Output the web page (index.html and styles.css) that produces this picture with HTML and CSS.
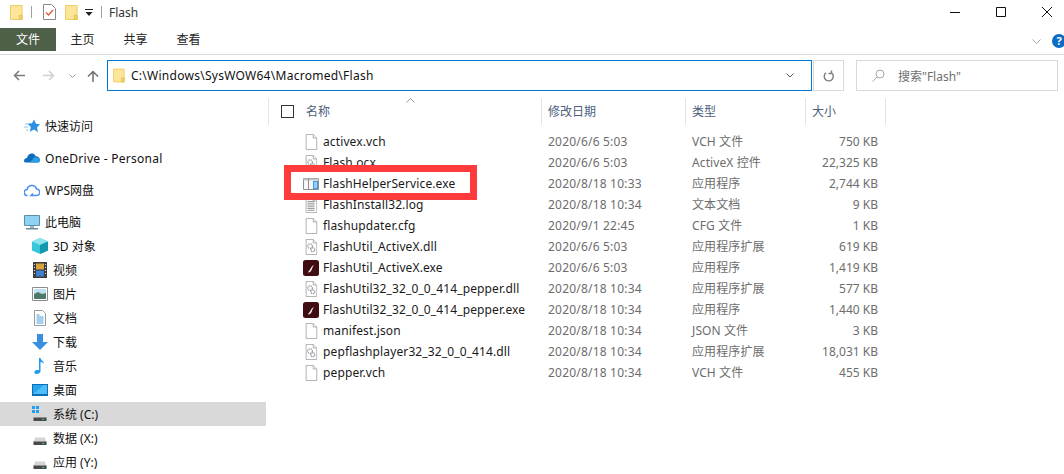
FILE: index.html
```html
<!DOCTYPE html>
<html lang="zh-CN">
<head>
    <meta charset="UTF-8">
    <title>Flash</title>
    <link rel="stylesheet" href="styles.css">
</head>
<body>
    <svg class="defs" width="0" height="0">
        <symbol id="folder" viewBox="0 0 14 16">
            <path d="M.5.5h12.5v15H.5z" fill="#fde69c" stroke="#ecc95a"/>
            <path d="M10 11h3v4.500h-3z" fill="#f8d775" stroke="#e3bb45"/>
        </symbol>
        <symbol id="blank" viewBox="0 0 14 18">
            <path d="M1.500.5h8l4 4v13h-12z" fill="#fff" stroke="#a8a8a8"/>
            <path d="M9.500.5v4h4" fill="#f2f2f2" stroke="#a8a8a8"/>
        </symbol>
        <symbol id="dll" viewBox="0 0 14 18">
            <use href="#blank" width="14" height="18"/>
            <circle cx="6" cy="8" r="2.600" fill="none" stroke="#9aa3ad" stroke-width="1.500" stroke-dasharray="1.500 .8"/>
            <circle cx="9" cy="12" r="2.200" fill="none" stroke="#7d8793" stroke-width="1.300" stroke-dasharray="1.300 .7"/>
        </symbol>
        <symbol id="log" viewBox="0 0 14 18">
            <use href="#blank" width="14" height="18"/>
            <path d="M3 5h8M3 7h8M3 9h8M3 11h8M3 13h8M3 15h8" stroke="#8c8c8c"/>
        </symbol>
        <symbol id="app" viewBox="0 0 16 12">
            <path d="M.5.500h15v11H.500z" fill="#f6f6f6" stroke="#8f8f8f"/>
            <path d="M.5.500h15v2H.500z" fill="#c9c9c9"/>
            <path d="M5.500.500v11" stroke="#8f8f8f"/>
            <path d="M10 3h5v8h-5z" fill="#3d9be9"/>
            <path d="M11 5h3M11 7h3M11 9h3" stroke="#fff"/>
        </symbol>
        <symbol id="swf" viewBox="0 0 16 16">
            <rect width="16" height="16" rx="2.500" fill="#3f0d12"/>
            <path d="M5 12.500c.5-1.500 1.500-2 2.300-3.500S9 5.500 11 5C10 6.500 9.500 7.500 8.800 9.500S7 12.500 5 12.500z" fill="#f4e9e4"/>
        </symbol>
        <symbol id="drive" viewBox="0 0 16 10">
            <path d="M2.500 1h11l2 5H.5z" fill="#d6d6d6"/>
            <path d="M.5 5.500h15V9.500H.5z" fill="#4a4a4a"/>
            <path d="M10.500 7h2v1.500h-2z" fill="#35d04f"/>
        </symbol>
    </svg>

    <div class="window">
        <header class="titlebar">
            <svg class="qat-folder" width="13" height="15"><use href="#folder"/></svg>
            <span class="qat-sep"></span>
            <svg class="qat-check" width="13" height="16" viewBox="0 0 13 16">
                <path d="M.5.500h8l4 4v11H.500z" fill="#fff" stroke="#8a8a8a"/>
                <path d="M3 8.500l2.500 2.500L10 6" fill="none" stroke="#e2593a" stroke-width="1.300"/>
            </svg>
            <svg class="qat-folder2" width="13" height="15"><use href="#folder"/></svg>
            <svg class="qat-arrow" width="8" height="7" viewBox="0 0 8 7">
                <path d="M0 0h8v1H0zM.500 3h7L4 7z" fill="#222"/>
            </svg>
            <span class="qat-sep qat-sep-last"></span>
            <span class="title">Flash</span>
            <div class="window-btns">
                <svg width="10" height="10" viewBox="0 0 10 10"><path d="M0 5.500h10" stroke="#111"/></svg>
                <svg width="10" height="10" viewBox="0 0 10 10"><path d="M.5.500h9v9h-9z" fill="none" stroke="#111"/></svg>
                <svg width="10" height="10" viewBox="0 0 10 10"><path d="M0 0l10 10M10 0L0 10" stroke="#111"/></svg>
            </div>
        </header>

        <nav class="ribbon">
            <a class="tab tab-file">文件</a>
            <a class="tab">主页</a>
            <a class="tab">共享</a>
            <a class="tab">查看</a>
            <svg class="ribbon-chevron" width="9" height="5" viewBox="0 0 9 5"><path d="M.5.500l4 4 4-4" fill="none" stroke="#a6a6a6"/></svg>
            <span class="help">?</span>
        </nav>

        <div class="addressbar">
            <svg class="nav-back" width="12" height="11" viewBox="0 0 12 11"><path d="M12 5.500H1.500M6 1L1.500 5.500 6 10" fill="none" stroke="#7a7a7a" stroke-width="1.500"/></svg>
            <svg class="nav-forward" width="12" height="11" viewBox="0 0 12 11"><path d="M0 5.500h10.500M6 1l4.500 4.500L6 10" fill="none" stroke="#d0d0d0" stroke-width="1.500"/></svg>
            <svg class="nav-recent" width="7" height="4" viewBox="0 0 7 4"><path d="M.5.500l3 3 3-3" fill="none" stroke="#9a9a9a"/></svg>
            <svg class="nav-up" width="12" height="12" viewBox="0 0 12 12"><path d="M6 12V1.500M1 6.500l5-5 5 5" fill="none" stroke="#6f6f6f" stroke-width="1.500"/></svg>
            <div class="path">
                <svg width="12" height="15"><use href="#folder"/></svg>
                <span class="path-text">C:\Windows\SysWOW64\Macromed\Flash</span>
                <svg class="path-chevron" width="8" height="5" viewBox="0 0 8 5"><path d="M.5.500L4 4 7.500.500" fill="none" stroke="#555"/></svg>
            </div>
            <div class="refresh">
                <svg width="11" height="12" viewBox="0 0 11 12"><path d="M3 2.800a4.500 4.500 0 1 0 5.500 0M8.500 .5v3h-3" fill="none" stroke="#7d7d7d" stroke-width="1.400"/></svg>
            </div>
            <div class="search">
                <svg width="13" height="13" viewBox="0 0 13 13"><circle cx="8" cy="5" r="4" fill="none" stroke="#a8a8a8"/><path d="M5 8l-4.500 4.500" stroke="#a8a8a8"/></svg>
                <span>搜索"Flash"</span>
            </div>
        </div>

        <div class="content">
            <aside class="sidebar">
                <div class="nav-item group">
                    <svg width="16" height="16" viewBox="0 0 16 16"><path d="M10 1.500l2 4.300 4 .5-3 3.200.9 4.700L10 11.400l-4.100 2.300.9-4.700-3.300-3.200 4.500-.5z" fill="#2d8fe0"/><path d="M1 6h3M0 9h4M2 12h2" stroke="#8cc4ee"/></svg>
                    <span>快速访问</span>
                </div>
                <div class="nav-item group">
                    <svg width="16" height="16" viewBox="0 0 16 16"><path d="M0 11c0-2 1.500-3 3-3 .5-3 3-5 5.500-4.500 1.500.300 2.700 1.300 3.200 2.700 2-.2 4.300 1.300 4.300 3.800 0 1.500-1 2.500-2 2.500H2c-1 0-2-.500-2-1.500z" fill="#0f6cbd"/><path d="M6 12.500l4-5c2-1 5.500 0 6 3 0 1-.8 2-2 2z" fill="#2a9fe6"/></svg>
                    <span class="latin">OneDrive - Personal</span>
                </div>
                <div class="nav-item group">
                    <svg width="16" height="16" viewBox="0 0 16 16"><path d="M3.500 13.500a3 3 0 0 1-.5-6c.5-2.500 2.500-4 5-4s4 1.500 4.500 3.500a3.200 3.200 0 0 1 0 6.500H7l2-2" fill="none" stroke="#4d8ef0" stroke-width="1.500"/></svg>
                    <span>WPS网盘</span>
                </div>
                <div class="nav-item group">
                    <svg width="16" height="15" viewBox="0 0 16 15"><path d="M.5.500h15v10H.5z" fill="#8fd3f4" stroke="#5a8fa8"/><path d="M6 11h4v2H6z" fill="#9db5c2"/><path d="M2 13h12v1.500H2z" fill="#6c8999"/></svg>
                    <span>此电脑</span>
                </div>
                <div class="nav-item sub">
                    <svg width="16" height="16" viewBox="0 0 16 16"><path d="M8 0l8 3.500v9L8 16l-8-3.500v-9z" fill="#38c6d9"/><path d="M8 0l8 3.500L8 7 0 3.500z" fill="#8be5ef"/><path d="M8 7l8-3.500v9L8 16z" fill="#1597b0"/></svg>
                    <span>3D 对象</span>
                </div>
                <div class="nav-item sub">
                    <svg width="16" height="16" viewBox="0 0 14 16"><path d="M0 0h14v16H0z" fill="#3c3c3c"/><path d="M3 1.500h8v6H3z" fill="#d6a33c"/><path d="M3 8.500h8v6H3z" fill="#3f7fd0"/><path d="M1 2h1v1H1zM1 5h1v1H1zM1 8h1v1H1zM1 11h1v1H1zM12 2h1v1h-1zM12 5h1v1h-1zM12 8h1v1h-1zM12 11h1v1h-1z" fill="#ddd"/></svg>
                    <span>视频</span>
                </div>
                <div class="nav-item sub">
                    <svg width="16" height="14" viewBox="0 0 16 14"><path d="M.5.500h15v13H.5z" fill="#fff" stroke="#8c8c8c"/><path d="M2 2h12v5H2z" fill="#bfe0f2"/><path d="M2 7l4-2 4 2 4-1v6H2z" fill="#4d7a66"/></svg>
                    <span>图片</span>
                </div>
                <div class="nav-item sub">
                    <svg width="16" height="16" viewBox="0 0 14 16"><path d="M1.500.5h8l3 3v12h-11z" fill="#fff" stroke="#9a9a9a"/><path d="M3.500 5h3M3.500 7h7M3.500 9h7M3.500 11h7M3.500 13h7" stroke="#4a9edb"/></svg>
                    <span>文档</span>
                </div>
                <div class="nav-item sub">
                    <svg width="16" height="16" viewBox="0 0 16 16"><path d="M5 0h6v8h5l-8 8-8-8h5z" fill="#3b8fe0"/></svg>
                    <span>下载</span>
                </div>
                <div class="nav-item sub">
                    <svg width="16" height="16" viewBox="0 0 16 16"><path d="M7 0h1.500c.3 2.500 3.500 3 3.500 6-1-1.500-2.500-2-3.500-2v9c0 2-2 3-4 3-1.500 0-2.500-1-2-2.300C3 12 5.500 11.500 7 12.300z" fill="#1e9bf0"/></svg>
                    <span>音乐</span>
                </div>
                <div class="nav-item sub">
                    <svg width="16" height="12" viewBox="0 0 16 12"><path d="M0 0h16v12H0z" fill="#0a6fb5"/><path d="M1 1h14v9H1z" fill="#27a5f0"/><path d="M1 10L12 1h3v9z" fill="#4fbdf7"/></svg>
                    <span>桌面</span>
                </div>
                <div class="nav-item sub selected">
                    <svg width="16" height="16" viewBox="0 0 16 16"><path d="M0 0h3v3H0zM4 0h3v3H4zM0 4h3v3H0zM4 4h3v3H4z" fill="#1ea1f2"/><use href="#drive" x="1" y="6.500" width="14" height="9"/></svg>
                    <span>系统 (C:)</span>
                </div>
                <div class="nav-item sub">
                    <svg width="16" height="16" viewBox="0 0 16 16"><use href="#drive" x="1" y="6.500" width="14" height="9"/></svg>
                    <span>数据 (X:)</span>
                </div>
                <div class="nav-item sub">
                    <svg width="16" height="16" viewBox="0 0 16 16"><use href="#drive" x="1" y="6.500" width="14" height="9"/></svg>
                    <span>应用 (Y:)</span>
                </div>
            </aside>

            <main class="files">
                <svg class="sort-arrow" width="9" height="5" viewBox="0 0 9 5"><path d="M.5 4.500l4-4 4 4" fill="none" stroke="#9a9a9a"/></svg>
                <div class="file-head">
                    <div class="col-name"><span class="checkbox"></span>名称</div>
                    <div>修改日期</div>
                    <div>类型</div>
                    <div>大小</div>
                </div>
                <div class="file-row"><div class="name"><svg width="16" height="16"><use href="#blank"/></svg>activex.vch</div><div>2020/6/6 5:03</div><div>VCH 文件</div><div class="size">750 KB</div></div>
                <div class="file-row"><div class="name"><svg width="16" height="16"><use href="#dll"/></svg>Flash.ocx</div><div>2020/6/6 5:03</div><div>ActiveX 控件</div><div class="size">22,325 KB</div></div>
                <div class="file-row"><div class="name"><svg width="16" height="12"><use href="#app"/></svg>FlashHelperService.exe</div><div>2020/8/18 10:33</div><div>应用程序</div><div class="size">2,744 KB</div></div>
                <div class="file-row"><div class="name"><svg width="16" height="16"><use href="#log"/></svg>FlashInstall32.log</div><div>2020/8/18 10:34</div><div>文本文档</div><div class="size">9 KB</div></div>
                <div class="file-row"><div class="name"><svg width="16" height="16"><use href="#blank"/></svg>flashupdater.cfg</div><div>2020/9/1 22:45</div><div>CFG 文件</div><div class="size">1 KB</div></div>
                <div class="file-row"><div class="name"><svg width="16" height="16"><use href="#dll"/></svg>FlashUtil_ActiveX.dll</div><div>2020/6/6 5:03</div><div>应用程序扩展</div><div class="size">619 KB</div></div>
                <div class="file-row"><div class="name"><svg width="16" height="16"><use href="#swf"/></svg>FlashUtil_ActiveX.exe</div><div>2020/6/6 5:03</div><div>应用程序</div><div class="size">1,419 KB</div></div>
                <div class="file-row"><div class="name"><svg width="16" height="16"><use href="#dll"/></svg>FlashUtil32_32_0_0_414_pepper.dll</div><div>2020/8/18 10:34</div><div>应用程序扩展</div><div class="size">577 KB</div></div>
                <div class="file-row"><div class="name"><svg width="16" height="16"><use href="#swf"/></svg>FlashUtil32_32_0_0_414_pepper.exe</div><div>2020/8/18 10:34</div><div>应用程序</div><div class="size">1,440 KB</div></div>
                <div class="file-row"><div class="name"><svg width="16" height="16"><use href="#blank"/></svg>manifest.json</div><div>2020/8/18 10:34</div><div>JSON 文件</div><div class="size">3 KB</div></div>
                <div class="file-row"><div class="name"><svg width="16" height="16"><use href="#dll"/></svg>pepflashplayer32_32_0_0_414.dll</div><div>2020/8/18 10:34</div><div>应用程序扩展</div><div class="size">18,031 KB</div></div>
                <div class="file-row"><div class="name"><svg width="16" height="16"><use href="#blank"/></svg>pepper.vch</div><div>2020/8/18 10:34</div><div>VCH 文件</div><div class="size">455 KB</div></div>
                <div class="red-box"></div>
            </main>
        </div>
    </div>
</body>
</html>
```

FILE: styles.css
```css
html, body {
    margin: 0;
    height: 100%;
    background: #fff;
}
body {
    font-family: "Noto Sans", "Noto Sans CJK SC", sans-serif;
    font-size: 12px;
    color: #1a1a1a;
    overflow: hidden;
}
svg {
    display: block;
    flex: none;
}
.defs {
    position: absolute;
}
.window {
    width: 1064px;
    height: 474px;
    overflow: hidden;
}

/* title bar */
.titlebar {
    display: flex;
    align-items: center;
    height: 24px;
    padding: 0 0 4px 10px;
}
.qat-sep {
    width: 1px;
    height: 12px;
    margin: 0 11px 0 8px;
    background: #a0a0a0;
}
.qat-folder2 {
    margin-left: 9px;
}
.qat-arrow {
    margin-left: 7px;
}
.qat-sep-last {
    margin-left: 8px;
    margin-right: 7px;
}
.title {
    color: #333;
}
.window-btns {
    display: flex;
    gap: 36px;
    margin-left: auto;
    padding-right: 12px;
}

/* ribbon */
.ribbon {
    display: flex;
    align-items: center;
    height: 26px;
    border-bottom: 1px solid #dadada;
}
.tab {
    width: 53px;
    padding-top: 1px;
    text-align: center;
    line-height: 22px;
    margin-bottom: 3px;
    color: #222;
}
.tab-file {
    width: 56px;
    background: #4f6049;
    color: #fff;
}
.ribbon-chevron {
    margin-left: auto;
    margin-right: 11px;
}
.help {
    width: 14px;
    height: 14px;
    margin-right: -2px;
    border-radius: 50%;
    background: #0a6cc4;
    color: #fff;
    font-weight: 700;
    font-size: 11px;
    line-height: 14px;
    text-align: center;
}

/* address bar */
.addressbar {
    display: flex;
    align-items: center;
    height: 31px;
    margin-top: 5px;
    margin-bottom: 6px;
}
.nav-back {
    margin-left: 13px;
}
.nav-forward {
    margin-left: 18px;
}
.nav-recent {
    margin-left: 14px;
}
.nav-up {
    margin-left: 11px;
}
.path {
    display: flex;
    align-items: center;
    width: 705px;
    height: 31px;
    box-sizing: border-box;
    margin-left: 8px;
    padding: 0 17px 0 5px;
    border: 1px solid #0078d7;
    color: #111;
}
.path-text {
    margin-left: 6px;
    letter-spacing: .27px;
}
.path-chevron {
    margin-left: auto;
}
.refresh {
    display: flex;
    align-items: center;
    justify-content: center;
    width: 31px;
    height: 31px;
    box-sizing: border-box;
    margin-left: 1px;
    border: 1px solid #d9d9d9;
}
.search {
    display: flex;
    align-items: center;
    gap: 13px;
    width: 202px;
    height: 31px;
    box-sizing: border-box;
    margin-left: 12px;
    padding-left: 15px;
    border: 1px solid #d9d9d9;
    color: #6f6f6f;
}

/* main area */
.content {
    display: flex;
    height: 383px;
}
.sidebar {
    width: 266px;
    flex: none;
    padding-top: 9px;
}
.nav-item {
    display: flex;
    align-items: center;
    gap: 5px;
    height: 24px;
    padding-left: 24px;
    white-space: nowrap;
    color: #111;
}
.group {
    margin-top: 8px;
}
.sub {
    padding-left: 32px;
}
.selected {
    background: #d9d9d9;
}
.latin {
    letter-spacing: .26px;
}

/* file list */
.files {
    position: relative;
    flex: 1;
}
.sort-arrow {
    position: absolute;
    left: 140px;
    top: 1px;
}
.file-head,
.file-row {
    display: grid;
    grid-template-columns: 274px 144px 120px 80px;
    margin-left: 2px;
}
.file-head {
    height: 27px;
    margin-top: 1px;
    margin-bottom: 6px;
    color: #4c607a;
    line-height: 27px;
}
.file-head > div {
    padding-left: 6px;
    border-right: 1px solid #e5e5e5;
}
.file-head > .col-name {
    display: flex;
    align-items: center;
    padding-left: 12px;
    border-left: 1px solid #e5e5e5;
}
.checkbox {
    width: 11px;
    height: 11px;
    margin-right: 12px;
    border: 1px solid #333;
}
.file-row {
    height: 21px;
    line-height: 21px;
    color: #6d6d6d;
}
.file-row > div {
    padding-left: 6px;
    white-space: nowrap;
}
.file-row > div:nth-child(2) {
    letter-spacing: .2px;
}
.file-row > div:nth-child(3) {
    letter-spacing: .1px;
}
.file-row > .name {
    display: flex;
    align-items: center;
    padding-left: 35px;
    color: #1a1a1a;
    letter-spacing: .12px;
}
.name svg {
    margin-right: 4px;
}
.file-row > .size {
    padding: 0 8px 0 0;
    text-align: right;
}

/* annotation drawn on the screenshot */
.red-box {
    position: absolute;
    left: 18px;
    top: 68px;
    width: 179px;
    height: 21px;
    border: 7px solid #ff3b3b;
}
```
